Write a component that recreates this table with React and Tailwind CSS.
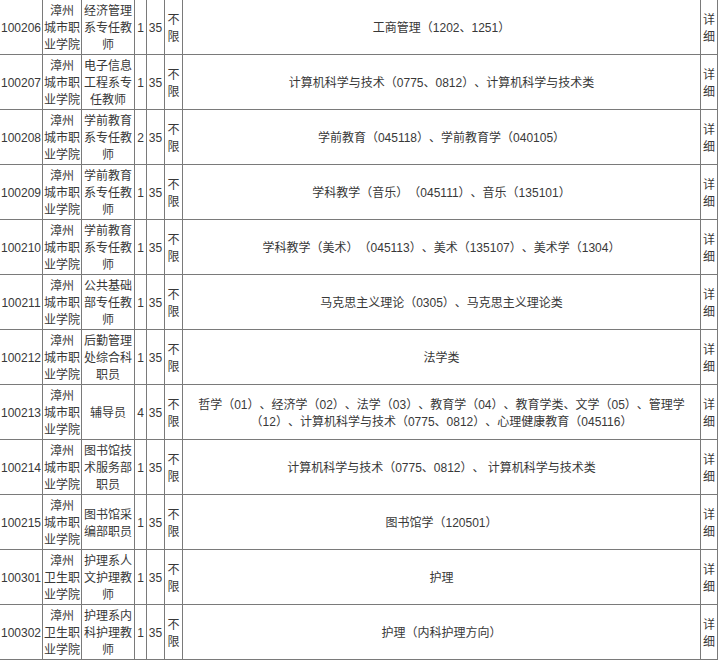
const ROWS = [
  ["100206", "城市", "经济管理系专任教师", "1", "工商管理（1202、1251）"],
  ["100207", "城市", "电子信息工程系专任教师", "1", "计算机科学与技术（0775、0812）、计算机科学与技术类"],
  ["100208", "城市", "学前教育系专任教师", "2", "学前教育（045118）、学前教育学（040105）"],
  ["100209", "城市", "学前教育系专任教师", "1", "学科教学（音乐）（045111）、音乐（135101）"],
  ["100210", "城市", "学前教育系专任教师", "1", "学科教学（美术）（045113）、美术（135107）、美术学（1304）"],
  ["100211", "城市", "公共基础部专任教师", "1", "马克思主义理论（0305）、马克思主义理论类"],
  ["100212", "城市", "后勤管理处综合科职员", "1", "法学类"],
  ["100213", "城市", "辅导员", "4", "哲学（01）、经济学（02）、法学（03）、教育学（04）、教育学类、文学（05）、管理学（12）、计算机科学与技术（0775、0812）、心理健康教育（045116）"],
  ["100214", "城市", "图书馆技术服务部职员", "1", "计算机科学与技术（0775、0812）、 计算机科学与技术类"],
  ["100215", "城市", "图书馆采编部职员", "1", "图书馆学（120501）"],
  ["100301", "卫生", "护理系人文护理教师", "1", "护理"],
  ["100302", "卫生", "护理系内科护理教师", "1", "护理（内科护理方向）"],
];

const cell = "border border-[#7a7a7a] px-0 pt-[3px] pb-0 align-middle text-center";

export default function App() {
  return (
    <div
      className="w-[720px] h-[661px] overflow-hidden bg-white text-[#383838] text-[12px] leading-[17px] [text-spacing-trim:space-all]"
      style={{ fontFamily: '"Liberation Sans", "Noto Sans CJK SC", sans-serif' }}
    >
      <table className="-mt-px -ml-px w-[718px] table-fixed border-collapse">
        <colgroup>
          <col className="w-[43px]" />
          <col className="w-[39px]" />
          <col className="w-[53px]" />
          <col className="w-[12px]" />
          <col className="w-[18px]" />
          <col className="w-[18px]" />
          <col className="w-[518px]" />
          <col className="w-[17px]" />
        </colgroup>
        <tbody>
          {ROWS.map((r) => (
            <tr key={r[0]} className="h-[55px]">
              <td className={cell}>{r[0]}</td>
              {/* employer name breaks as 漳州 / X职 / 业学院 in the source */}
              <td className={cell}>
                漳州
                <br />
                {r[1]}职
                <br />
                业学院
              </td>
              <td className={cell}>{r[2]}</td>
              <td className={cell}>{r[3]}</td>
              <td className={cell}>35</td>
              <td className={cell}>不限</td>
              <td className={`${cell} px-2`}>{r[4]}</td>
              <td className={cell}>详细</td>
            </tr>
          ))}
        </tbody>
      </table>
    </div>
  );
}
